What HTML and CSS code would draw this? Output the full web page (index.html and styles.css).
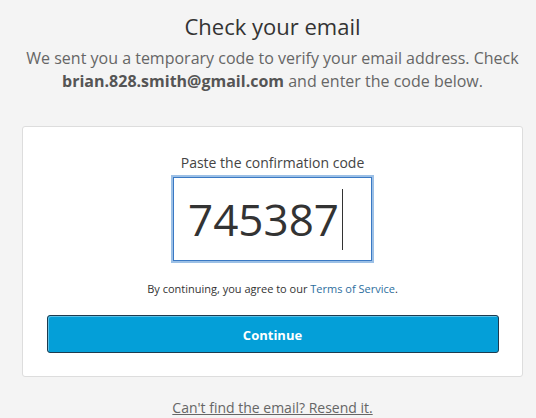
FILE: index.html
```html
<!DOCTYPE html>
<html lang="en">
<head>
<meta charset="utf-8">
<title>Check your email</title>
<link rel="stylesheet" href="styles.css">
</head>
<body>
<main class="page">
  <h1 class="title">Check your email</h1>
  <p class="lead">We sent you a temporary code to verify your email address. Check <strong>brian.828.smith@gmail.com</strong> and enter the code below.</p>
  <section class="card">
    <label class="code-label" for="code">Paste the confirmation code</label>
    <div class="code-box"><span class="code-value">745387</span><span class="caret"></span></div>
    <p class="terms">By continuing, you agree to our <a href="#" class="terms-link">Terms of Service</a>.</p>
    <button class="continue" type="button">Continue</button>
  </section>
  <p class="resend"><a href="#" class="resend-link">Can't find the email? Resend it.</a></p>
</main>
</body>
</html>
```
FILE: styles.css
```css
html, body {
  margin: 0;
  padding: 0;
  background: #f4f4f4;
}
body {
  font-family: "Open Sans", "Liberation Sans", sans-serif;
  color: #333;
}
.page {
  width: 501px;
  margin-left: 22px;
  display: flex;
  flex-direction: column;
  align-items: center;
}
.title {
  margin: 11px 0 0;
  font-size: 22px;
  font-weight: 400;
  line-height: 30px;
  color: #333;
}
.lead {
  margin: 6px 0 0;
  width: 520px;
  text-align: center;
  font-size: 16px;
  line-height: 23px;
  color: #666;
}
.lead strong {
  font-weight: 700;
  color: #555;
}
.card {
  box-sizing: border-box;
  width: 501px;
  margin-top: 33px;
  background: #fff;
  border: 1px solid #ddd;
  border-radius: 3px;
  padding: 26px 24px 23px;
  display: flex;
  flex-direction: column;
  align-items: center;
}
.code-label {
  font-size: 14px;
  line-height: 20px;
  color: #444;
}
.code-box {
  box-sizing: border-box;
  margin-top: 4px;
  width: 199px;
  height: 84px;
  border: 1px solid #3a79c4;
  box-shadow: 0 0 0 2px #9cc0e6;
  display: flex;
  align-items: center;
  padding-left: 14px;
  color: #333;
}
.code-value {
  font-size: 44px;
  line-height: 60px;
}
.caret {
  width: 1px;
  height: 61px;
  background: #333;
  margin-left: 3px;
}
.terms {
  margin: 20px 0 0;
  font-size: 11px;
  line-height: 16px;
  color: #333;
}
.terms-link {
  color: #2d6e9e;
  text-decoration: none;
}
.continue {
  margin-top: 18px;
  width: 452px;
  height: 38px;
  padding: 2px 0 0;
  background: #049fd8;
  border: 1px solid #1d3b4f;
  border-radius: 3px;
  box-shadow: inset 1px 1px 0 rgba(255, 255, 255, 0.35);
  color: #fff;
  font-family: "Open Sans", "Liberation Sans", sans-serif;
  font-size: 13px;
  font-weight: 700;
}
.resend {
  margin: 21px 0 0;
  font-size: 14px;
  line-height: 20px;
}
.resend-link {
  color: #666;
  text-decoration: underline;
}
```
